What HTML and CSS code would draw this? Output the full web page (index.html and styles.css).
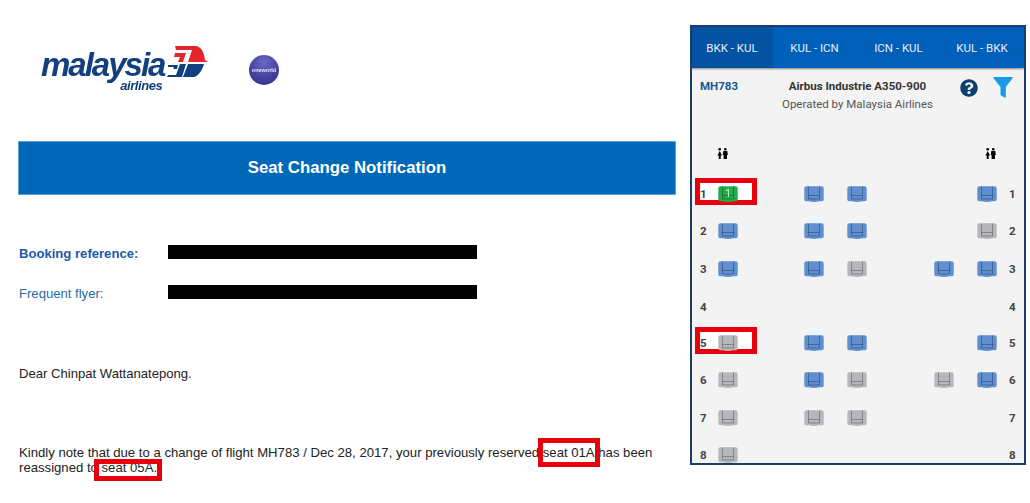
FILE: index.html
```html
<!DOCTYPE html>
<html lang="en">
<head>
<meta charset="utf-8">
<title>Seat Change Notification</title>
<link rel="stylesheet" href="styles.css">
</head>
<body>
<svg class="defs" width="0" height="0" aria-hidden="true">
  <symbol id="seat" viewBox="0 0 20 16">
    <path d="M2.500 0.300H17.500Q19.700 0.300 19.700 2.500V13.500Q19.700 15.200 18 15.200H15Q13 16 10 16T5 15.200H2Q0.300 15.200 0.300 13.500V2.500Q0.300 0.300 2.500 0.300Z" fill="currentColor"/>
    <path d="M4.500 0.500V13H15.500V0.500M4.500 9.500H15.500" fill="none" stroke="#000" stroke-opacity=".28" stroke-width="1"/>
  </symbol>
  <symbol id="lav" viewBox="0 0 11 11">
    <circle cx="2.700" cy="1.300" r="1.300"/><circle cx="8.300" cy="1.300" r="1.300"/>
    <path d="M2.700 3L5 7.500H3.700V11H1.700V7.500H.4ZM6.300 3H10.300L10.800 7H10V11H6.600V7H5.800Z"/>
  </symbol>
</svg>

<main class="mail">
  <div class="logos">
    <div class="mas">
      <div class="mas-words">
        <span class="mas-name">malaysia</span>
        <span class="mas-sub">airlines</span>
      </div>
      <svg class="mas-wing" width="42" height="34" viewBox="0 0 42 34" aria-hidden="true">
        <path d="M8 1H29C35 2 37 8 38 15L41 17H21L25 5H9Z" fill="#e5252b"/>
        <path d="M8 8H19L16 17H11L13 12H7Z" fill="#e5252b"/>
        <path d="M1 20H11L10 24H6L7 22H1Z" fill="#123f7f"/>
        <path d="M13 19H19L15 32H0L1 30H9Z" fill="#123f7f"/>
        <path d="M21 19H37C35 26 31 31 27 32H16Z" fill="#123f7f"/>
      </svg>
    </div>
    <div class="oneworld"><span>oneworld</span></div>
  </div>

  <h1 class="banner">Seat Change Notification</h1>

  <div class="ref-row ref-row-first">
    <span class="ref-label ref-strong">Booking reference:</span>
    <span class="redact"></span>
  </div>
  <div class="ref-row">
    <span class="ref-label">Frequent flyer:</span>
    <span class="redact"></span>
  </div>

  <p class="dear">Dear Chinpat Wattanatepong.</p>
  <p class="note">Kindly note that due to a change of flight MH783 / Dec 28, 2017, your previously reserved <span class="mark mark-old">seat 01A</span> has been reassigned to <span class="mark mark-new">seat 05A.</span></p>
</main>

<aside class="panel">
  <nav class="tabs">
    <span class="tab tab-on">BKK - KUL</span>
    <span class="tab">KUL - ICN</span>
    <span class="tab">ICN - KUL</span>
    <span class="tab">KUL - BKK</span>
  </nav>

  <div class="info">
    <span class="flight">MH783</span>
    <div class="plane">
      <strong>Airbus Industrie A350-900</strong>
      <span>Operated by Malaysia Airlines</span>
    </div>
    <svg class="help" width="18" height="18" viewBox="0 0 512 512" aria-hidden="true"><path fill="#0b3f70" d="M504 256c0 136.997-111.043 248-248 248S8 392.997 8 256C8 119.083 119.043 8 256 8s248 111.083 248 248zM262.655 90c-54.497 0-89.255 22.957-116.549 63.758-3.536 5.286-2.353 12.415 2.715 16.258l34.699 26.31c5.205 3.947 12.621 3.008 16.665-2.122 17.864-22.658 30.113-35.797 57.303-35.797 20.429 0 45.698 13.148 45.698 32.958 0 14.976-12.363 22.667-32.534 33.976C247.128 238.528 216 254.941 216 296v4c0 6.627 5.373 12 12 12h56c6.627 0 12-5.373 12-12v-1.333c0-28.462 83.186-29.647 83.186-106.667 0-58.002-60.165-102-116.531-102zM256 338c-25.365 0-46 20.635-46 46 0 25.364 20.635 46 46 46s46-20.636 46-46c0-25.365-20.635-46-46-46z"/></svg>
    <svg class="filter" width="20" height="21" viewBox="0 0 20 21" aria-hidden="true"><path fill="#189be6" d="M1 0H19Q20.300 0 19.500 1.200L12.800 10V20Q12.800 21 11.800 20.500L8.200 18.500Q7.500 18.100 7.500 17.300V10L0.500 1.200Q-.3 0 1 0Z"/></svg>
  </div>

  <div class="lavs">
    <svg width="11" height="11" aria-hidden="true"><use href="#lav"/></svg>
    <svg width="11" height="11" aria-hidden="true"><use href="#lav"/></svg>
  </div>

  <div class="rows">
    <div class="row">
      <span class="hl"></span><span class="num">1</span>
      <div class="seat c1 green"><svg width="20" height="16"><use href="#seat"/></svg><b>1</b></div>
      <div class="seat c2 blue"><svg width="20" height="16"><use href="#seat"/></svg></div>
      <div class="seat c3 blue"><svg width="20" height="16"><use href="#seat"/></svg></div>
      <div class="seat c5 blue"><svg width="20" height="16"><use href="#seat"/></svg></div>
      <span class="num num-r">1</span>
    </div>
    <div class="row">
      <span class="num">2</span>
      <div class="seat c1 blue"><svg width="20" height="16"><use href="#seat"/></svg></div>
      <div class="seat c2 blue"><svg width="20" height="16"><use href="#seat"/></svg></div>
      <div class="seat c3 blue"><svg width="20" height="16"><use href="#seat"/></svg></div>
      <div class="seat c5 grey"><svg width="20" height="16"><use href="#seat"/></svg></div>
      <span class="num num-r">2</span>
    </div>
    <div class="row">
      <span class="num">3</span>
      <div class="seat c1 blue"><svg width="20" height="16"><use href="#seat"/></svg></div>
      <div class="seat c2 blue"><svg width="20" height="16"><use href="#seat"/></svg></div>
      <div class="seat c3 grey"><svg width="20" height="16"><use href="#seat"/></svg></div>
      <div class="seat c4 blue"><svg width="20" height="16"><use href="#seat"/></svg></div>
      <div class="seat c5 blue"><svg width="20" height="16"><use href="#seat"/></svg></div>
      <span class="num num-r">3</span>
    </div>
    <div class="row row-empty">
      <span class="num">4</span>
      <span class="num num-r">4</span>
    </div>
    <div class="row">
      <span class="hl"></span><span class="num">5</span>
      <div class="seat c1 grey"><svg width="20" height="16"><use href="#seat"/></svg></div>
      <div class="seat c2 blue"><svg width="20" height="16"><use href="#seat"/></svg></div>
      <div class="seat c3 blue"><svg width="20" height="16"><use href="#seat"/></svg></div>
      <div class="seat c5 blue"><svg width="20" height="16"><use href="#seat"/></svg></div>
      <span class="num num-r">5</span>
    </div>
    <div class="row">
      <span class="num">6</span>
      <div class="seat c1 grey"><svg width="20" height="16"><use href="#seat"/></svg></div>
      <div class="seat c2 blue"><svg width="20" height="16"><use href="#seat"/></svg></div>
      <div class="seat c3 grey"><svg width="20" height="16"><use href="#seat"/></svg></div>
      <div class="seat c4 grey"><svg width="20" height="16"><use href="#seat"/></svg></div>
      <div class="seat c5 blue"><svg width="20" height="16"><use href="#seat"/></svg></div>
      <span class="num num-r">6</span>
    </div>
    <div class="row">
      <span class="num">7</span>
      <div class="seat c1 grey"><svg width="20" height="16"><use href="#seat"/></svg></div>
      <div class="seat c2 grey"><svg width="20" height="16"><use href="#seat"/></svg></div>
      <div class="seat c3 grey"><svg width="20" height="16"><use href="#seat"/></svg></div>
      <span class="num num-r">7</span>
    </div>
    <div class="row">
      <span class="num">8</span>
      <div class="seat c1 grey"><svg width="20" height="16"><use href="#seat"/></svg></div>
      <span class="num num-r">8</span>
    </div>
  </div>
</aside>
</body>
</html>
```

FILE: styles.css
```css
* { box-sizing: border-box; }

html, body { height: 100%; }

body {
  margin: 0;
  padding: 25px 4px 0 18px;
  display: flex;
  align-items: flex-start;
  gap: 14px;
  overflow: hidden;
  background: #fff;
  font-family: "Liberation Sans", Arial, sans-serif;
  color: #222;
}

.defs { position: absolute; }

/* ---------- e-mail ---------- */
.mail { width: 658px; flex: none; }

.logos {
  height: 116px;
  padding: 21px 0 0 23px;
  display: flex;
  align-items: flex-start;
  filter: blur(.35px);
}

.mas { display: flex; align-items: flex-start; width: 167px; }

.mas-words {
  width: 127px;
  display: flex;
  flex-direction: column;
  align-items: flex-end;
  padding-top: 2px;
  color: #123f7f;
  font-weight: 700;
  font-style: italic;
}

.mas-name {
  font-size: 33px;
  line-height: 34px;
  letter-spacing: -2px;
  margin-right: 2px;
}

.mas-sub {
  font-size: 13px;
  line-height: 11px;
  letter-spacing: -.4px;
  margin: -2px 4px 0 0;
}

.mas-wing { flex: none; margin-top: -1px; margin-left: 1px; }

.oneworld {
  width: 30px;
  height: 30px;
  margin: 9px 0 0 41px;
  border-radius: 50%;
  background: radial-gradient(circle at 50% 25%, #6a68c4 0%, #43429f 55%, #2f2f88 100%);
  display: flex;
  align-items: center;
  justify-content: center;
  overflow: hidden;
  color: #e8e8f6;
  font-size: 5.5px;
  font-weight: 700;
  white-space: nowrap;
}

.banner {
  margin: 0;
  height: 54px;
  background: #0068b6;
  border: 1px solid #5aa2d8;
  color: #fff;
  font-size: 16.8px;
  font-weight: 700;
  line-height: 52px;
  text-align: center;
}

.ref-row {
  display: flex;
  align-items: center;
  height: 14px;
  margin-top: 26px;
  font-size: 13.1px;
}

.ref-row-first { margin-top: 50px; }

.ref-label { width: 150px; padding: 3px 0 0 1px; color: #2a6aa8; }
.ref-strong { color: #1a5ba5; font-weight: 700; }

.redact { width: 309px; height: 14px; background: #000; }

.dear {
  margin: 67px 0 0;
  padding-left: 1px;
  font-size: 13.1px;
  line-height: 15px;
}

.note {
  margin: 65px 0 0;
  padding-left: 1px;
  font-size: 13.15px;
  line-height: 14.5px;
}

/* red annotations drawn on the screenshot */
.mark { position: relative; }

.mark::after {
  content: "";
  position: absolute;
  border: 5px solid #e8000d;
}

.mark-old::after { top: -7px; bottom: -7px; left: -5px; right: -5px; }
.mark-new::after { top: -1px; bottom: -6px; left: -8px; right: -5px; }

/* ---------- seat map panel ---------- */
.panel {
  width: 336px;
  height: 440px;
  flex: none;
  overflow: hidden;
  background: #f3f3f3;
  border: 2px solid #1b3c6e;
  font-family: Roboto, "Liberation Sans", sans-serif;
}

.tabs {
  position: relative;
  display: grid;
  grid-template-columns: 81px 84px 84px 1fr;
  height: 41px;
  background: #0060b9;
  box-shadow: 0 1px 2px rgba(0, 0, 0, .45);
}

.tab {
  display: flex;
  align-items: center;
  justify-content: center;
  padding-right: 1px;
  color: #e6eef8;
  font-size: 11.5px;
  white-space: nowrap;
}

.tab-on { background: #0453a2; }

.info {
  display: grid;
  grid-template-columns: 8px 40px 1fr 18px 15px 20px 11px;
  height: 65px;
  padding-top: 9px;
}

.flight {
  grid-column: 2;
  color: #16578f;
  font-size: 11.5px;
  font-weight: 700;
  line-height: 18px;
}

.plane {
  grid-column: 3;
  display: flex;
  flex-direction: column;
  align-items: center;
  padding-left: 15px;
  font-size: 11.5px;
  line-height: 18px;
  color: #555;
}

.plane strong { color: #333; font-weight: 700; }

.help { grid-column: 4; margin-top: 2px; }
.filter { grid-column: 6; }

.lavs {
  display: flex;
  justify-content: space-between;
  height: 42px;
  padding: 15px 28px 0 25px;
}

.rows { display: flex; flex-direction: column; }

.row {
  position: relative;
  flex: none;
  height: 37.5px;
  display: grid;
  grid-template-columns: 26px 20px 66px 20px 23px 20px 67px 20px 23px 20px 1fr;
  align-items: center;
  color: #444;
  font-size: 11.5px;
  font-weight: 700;
}

.row-empty { height: 36.5px; padding-top: 2px; }

.num { grid-column: 1; padding-left: 8px; position: relative; }
.num-r { grid-column: 11; padding-left: 12px; }

.seat {
  position: relative;
  height: 16px;
  line-height: 0;
  filter: blur(.3px);
}

.c1 { grid-column: 2; }
.c2 { grid-column: 4; }
.c3 { grid-column: 6; }
.c4 { grid-column: 8; }
.c5 { grid-column: 10; }

.blue { color: #5f8fd0; }
.grey { color: #b6b7bb; }
.green { color: #20ad4a; }

.seat b {
  position: absolute;
  inset: 0;
  display: flex;
  align-items: center;
  justify-content: center;
  color: #bff0cc;
  font-size: 11px;
  font-weight: 400;
  line-height: 1;
}

.hl {
  position: absolute;
  left: 3px;
  top: 3px;
  width: 62px;
  height: 27px;
  background: #fff;
  border: 5px solid #e8000d;
}
```
